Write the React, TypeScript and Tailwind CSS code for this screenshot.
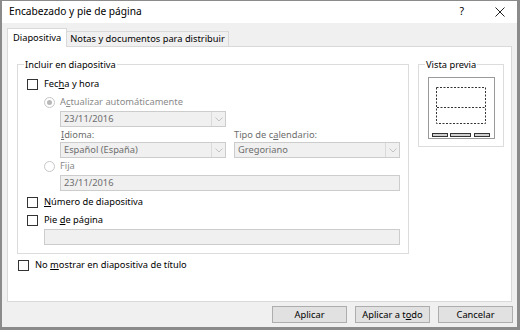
import React from 'react';

const font = { fontFamily: '"Segoe UI", "Noto Sans", sans-serif' };

const Check: React.FC<{ children: React.ReactNode; className?: string }> = ({ children, className = '' }) => (
  <div className={`flex items-center h-[14px] ${className}`}>
    <span className="w-[11px] h-[11px] border border-[#333333] bg-white shrink-0" />
    <span className="ml-[6px] text-black">{children}</span>
  </div>
);

const Radio: React.FC<{ checked?: boolean; children: React.ReactNode; className?: string }> = ({
  checked,
  children,
  className = '',
}) => (
  <div className={`flex items-center h-[14px] ${className}`}>
    <span className="w-[11px] h-[11px] rounded-full border border-[#c6c6c6] bg-white flex items-center justify-center shrink-0">
      {checked && <span className="w-[5px] h-[5px] rounded-full bg-[#b8b8b8]" />}
    </span>
    <span className="ml-[5px] text-[#8a8a8a]">{children}</span>
  </div>
);

const Select: React.FC<{ value: string; className?: string }> = ({ value, className = '' }) => (
  <div className={`flex h-[16px] border border-[#cccccc] bg-[#f0f0f0] ${className}`}>
    <span className="flex-1 pl-[3px] leading-[14px] text-[#6d6d6d]">{value}</span>
    <span className="w-[14px] border-l border-[#dadada] flex items-center justify-center">
      <svg width="8" height="5" viewBox="0 0 8 5">
        <path d="M0.5 0.5 L4 4 L7.5 0.5" fill="none" stroke="#c3c3c3" strokeWidth="1" />
      </svg>
    </span>
  </div>
);

const Input: React.FC<{ value?: string; className?: string }> = ({ value = '', className = '' }) => (
  <div className={`h-[16px] border border-[#cccccc] bg-[#f0f0f0] pl-[3px] leading-[14px] text-[#6d6d6d] ${className}`}>
    {value}
  </div>
);

const Btn: React.FC<{ children: React.ReactNode }> = ({ children }) => (
  <button className="w-[75px] h-[17px] border border-[#adadad] bg-[#e1e1e1] text-black leading-[15px]">
    {children}
  </button>
);

export default function App() {
  return (
    <div
      className="w-[520px] h-[330px] bg-[#8b8b8b] pl-[2px] pt-[1px] pr-[3px] pb-[3px] text-[9.3px]"
      style={font}
    >
      <div className="w-full h-full bg-[#f0f0f0] flex flex-col">
        {/* title bar */}
        <div className="h-[22px] bg-white flex items-center pl-[7px] pr-[12px]">
          <span className="text-[10.2px] text-black">Encabezado y pie de página</span>
          <span className="ml-auto text-[10.5px] text-black">?</span>
          <svg className="ml-[31px]" width="10" height="10" viewBox="0 0 10 10">
            <path d="M0.5 0.5 L9.5 9.5 M9.5 0.5 L0.5 9.5" stroke="#222" strokeWidth="1" />
          </svg>
        </div>

        {/* tabs */}
        <div className="flex items-end pl-[5px] h-[23px]">
          <div className="relative z-10 h-[19px] -mb-px px-[5px] bg-white border border-b-0 border-[#d9d9d9] flex items-center text-black">
            Diapositiva
          </div>
          <div className="h-[15px] px-[3px] border border-b-0 border-l-0 border-[#d9d9d9] flex items-center text-black">
            Notas y documentos para distribuir
          </div>
        </div>

        {/* panel */}
        <div className="mx-[5px] h-[256px] bg-white border border-[#d9d9d9] flex flex-col">
          <div className="flex pl-[9px] pt-[17px]">
            {/* Incluir group */}
            <div className="relative w-[392px] h-[190px] border border-[#dcdcdc] pl-[9px] pt-[12px]">
              <span className="absolute -top-[8px] left-[6px] px-[1px] bg-white text-black leading-[15px]">
                Incluir en diapositiva
              </span>
              <Check>
                Fec<u>h</u>a y hora
              </Check>
              <div className="pl-[17px]">
                <Radio checked className="mt-[4px]">
                  A<u>c</u>tualizar automáticamente
                </Radio>
                <div className="pl-[16px]">
                  <Select value="23/11/2016" className="w-[166px] mt-[2px]" />
                  <div className="flex gap-[8px]">
                    <div className="flex flex-col">
                      <span className="h-[15px] leading-[15px] pl-[1px] text-[#6d6d6d]">
                        <u>I</u>dioma:
                      </span>
                      <Select value="Español (España)" className="w-[166px]" />
                    </div>
                    <div className="flex flex-col">
                      <span className="h-[15px] leading-[15px] text-[#6d6d6d]">
                        Tipo de c<u>a</u>lendario:
                      </span>
                      <Select value="Gregoriano" className="w-[166px]" />
                    </div>
                  </div>
                </div>
                <Radio className="mt-[1px]">Fija</Radio>
                <Input value="23/11/2016" className="ml-[16px] w-[340px] mt-[2px]" />
              </div>
              <Check className="mt-[4px]">
                <u>N</u>úmero de diapositiva
              </Check>
              <Check className="mt-[4px]">
                Pie <u>d</u>e página
              </Check>
              <Input className="ml-[17px] w-[356px] mt-[2px]" />
            </div>

            {/* Vista previa group */}
            <div className="relative ml-[9px] w-[86px] h-[83px] border border-[#dcdcdc] pl-[9px] pt-[12px]">
              <span className="absolute -top-[8px] left-[6px] px-[1px] bg-white text-black leading-[15px]">
                Vista previa
              </span>
              <svg width="67" height="62" viewBox="0 0 67 62">
                <rect x="0.5" y="0.5" width="66" height="61" fill="white" stroke="#9a9a9a" />
                <rect x="8.5" y="10.5" width="49" height="36" fill="none" stroke="#333" strokeDasharray="2 1.5" />
                <line x1="9" y1="30.5" x2="57" y2="30.5" stroke="#333" strokeDasharray="2 1.5" />
                <rect x="4.5" y="56.5" width="15" height="3" fill="#d0d0d0" stroke="#333" />
                <rect x="22.5" y="56.5" width="20" height="3" fill="#d0d0d0" stroke="#333" />
                <rect x="46.5" y="56.5" width="15" height="3" fill="#d0d0d0" stroke="#333" />
              </svg>
            </div>
          </div>
          <Check className="ml-[10px] mt-[4px]">
            No <u>m</u>ostrar en diapositiva de título
          </Check>
        </div>

        {/* buttons */}
        <div className="flex justify-end gap-[8px] pr-[4px] pt-[4px]">
          <Btn>Aplicar</Btn>
          <Btn>
            Aplicar a t<u>o</u>do
          </Btn>
          <Btn>Cancelar</Btn>
        </div>
      </div>
    </div>
  );
}
